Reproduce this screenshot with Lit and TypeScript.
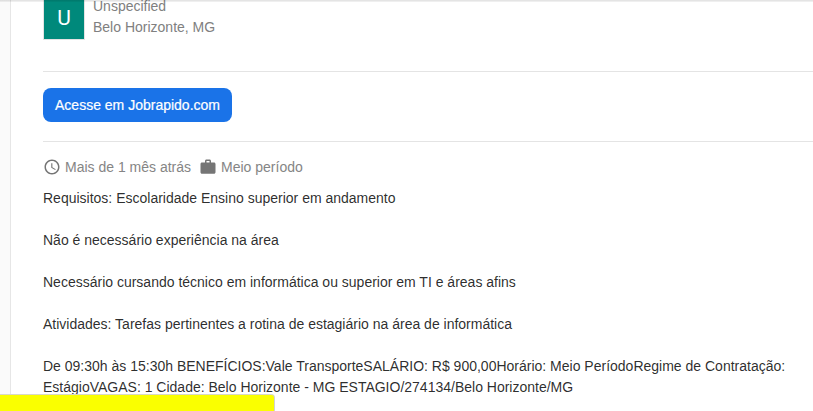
import { LitElement, html, css } from "lit";
import { customElement } from "lit/decorators.js";

@customElement("app-root")
export class AppRoot extends LitElement {
  static styles = css`
    :host {
      display: flex;
      position: relative;
      width: 100%;
      height: 100vh;
      overflow: hidden;
      box-sizing: border-box;
      background: #fafafa;
      padding-left: 10px;
      font: 14px/21px "Liberation Sans", Arial, sans-serif;
      color: rgba(0, 0, 0, 0.84);
    }
    .top-shadow {
      position: absolute;
      inset: 0 0 auto 0;
      height: 2px;
      background: linear-gradient(rgba(0, 0, 0, 0.13), rgba(0, 0, 0, 0.04));
    }
    .panel {
      flex: 1;
      min-width: 0;
      background: #fff;
      border-left: 1px solid #e6e6e6;
      padding-left: 32px;
      display: flex;
      flex-direction: column;
    }
    .company {
      display: flex;
      gap: 8px;
      height: 71px;
      color: #808080;
    }
    .logo {
      box-sizing: border-box;
      width: 42px;
      height: 40px;
      border: 1px solid #e3e3e3;
      border-top: 0;
      background: #00897b;
      color: #fff;
      font-family: Roboto, sans-serif;
      font-size: 21px;
      line-height: 37px;
      text-align: center;
    }
    .where {
      margin-top: -4px;
    }
    .apply {
      box-sizing: border-box;
      height: 71px;
      padding-top: 16px;
      border: solid #e4e4e4;
      border-width: 1px 0;
    }
    .button {
      display: inline-block;
      width: 189px;
      height: 34px;
      border-radius: 8px;
      background: #1a73e8;
      color: #fff;
      line-height: 34px;
      text-align: center;
      -webkit-text-stroke: 0.2px #fff;
    }
    .facts {
      display: flex;
      align-items: center;
      margin-top: 15px;
      height: 20px;
      color: #858585;
    }
    .facts svg {
      width: 18px;
      height: 18px;
      margin-right: 4px;
      fill: #757575;
    }
    .fact {
      display: flex;
      align-items: center;
      margin-right: 8px;
    }
    .description {
      margin-top: 11px;
      white-space: pre-line;
    }
    .status {
      position: absolute;
      left: 0;
      bottom: 0;
      width: 274px;
      height: 16px;
      background: #faff00;
      border-top: 1px solid #d8d8c8;
      border-right: 1px solid #d2d2d2;
      border-top-right-radius: 4px;
    }
  `;

  private paragraphs = [
    "Requisitos: Escolaridade Ensino superior em andamento",
    "Não é necessário experiência na área",
    "Necessário cursando técnico em informática ou superior em TI e áreas afins",
    "Atividades: Tarefas pertinentes a rotina de estagiário na área de informática",
    "De 09:30h às 15:30h BENEFÍCIOS:Vale TransporteSALÁRIO: R$ 900,00Horário: Meio PeríodoRegime de Contratação:\nEstágioVAGAS: 1 Cidade: Belo Horizonte - MG ESTAGIO/274134/Belo Horizonte/MG",
  ];

  render() {
    return html`
      <main class="panel">
        <div class="company">
          <div class="logo">U</div>
          <div class="where">
            <div>Unspecified</div>
            <div>Belo Horizonte, MG</div>
          </div>
        </div>
        <div class="apply"><a class="button">Acesse em Jobrapido.com</a></div>
        <div class="facts">
          <span class="fact">
            <svg viewBox="0 0 24 24">
              <path d="M11.99 2C6.47 2 2 6.48 2 12s4.47 10 9.99 10C17.52 22 22 17.52 22 12S17.52 2 11.99 2zM12 20c-4.42 0-8-3.58-8-8s3.58-8 8-8 8 3.58 8 8-3.58 8-8 8zm.5-13H11v6l5.25 3.15.75-1.23-4.5-2.67z" />
            </svg>
            Mais de 1 mês atrás
          </span>
          <span class="fact">
            <svg viewBox="0 0 24 24">
              <path d="M20 6h-4V4c0-1.11-.89-2-2-2h-4c-1.11 0-2 .89-2 2v2H4c-1.11 0-1.99.89-1.99 2L2 19c0 1.11.89 2 2 2h16c1.11 0 2-.89 2-2V8c0-1.11-.89-2-2-2zm-6 0h-4V4h4v2z" />
            </svg>
            Meio período
          </span>
        </div>
        <div class="description">${this.paragraphs.join("\n\n")}</div>
      </main>
      <div class="top-shadow"></div>
      <div class="status"></div>
    `;
  }
}
